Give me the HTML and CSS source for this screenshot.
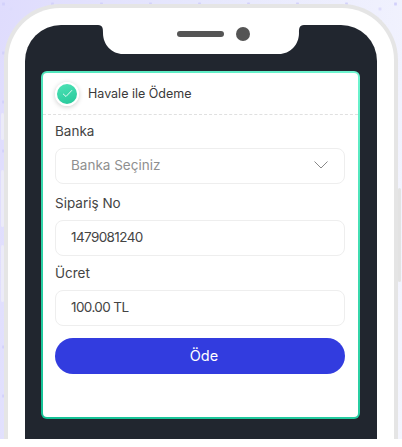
FILE: index.html
```html
<!DOCTYPE html>
<html lang="tr">
   <head>
      <meta charset="utf-8">
      <meta name="viewport" content="width=device-width, initial-scale=1">
      <title>Havale ile Ödeme</title>
      <link rel="stylesheet" href="styles.css">
   </head>
   <body>
      <div class="stage">
         <span class="side-btn side-left btn-a"></span>
         <span class="side-btn side-left btn-b"></span>
         <span class="side-btn side-left btn-c"></span>
         <span class="side-btn side-right"></span>
         <div class="phone">
            <div class="screen">
               <svg class="notch" width="206" height="29" viewBox="0 0 206 29">
                  <path d="M0 0H206C201 0 201 4 201 8C201 20 192 29 181 29H25C14 29 5 20 5 8C5 4 5 0 0 0Z" fill="#fff"/>
                  <rect x="79" y="6" width="47" height="6" rx="3" fill="#555"/>
                  <circle cx="145" cy="9" r="7" fill="#555"/>
               </svg>
               <form class="card">
                  <div class="method">
                     <span class="tick">
                        <svg width="11" height="9" viewBox="0 0 11 9"><path d="M1 4.8L4 7.5L10 1.2" fill="none" stroke="#e8fbf5" stroke-width="1"/></svg>
                     </span>
                     <span class="method-name">Havale ile Ödeme</span>
                  </div>
                  <div class="fields">
                     <label class="field-label label-first">Banka</label>
                     <div class="field select-field">
                        <span class="placeholder">Banka Seçiniz</span>
                        <svg width="14" height="8" viewBox="0 0 14 8"><path d="M0.5 0.5L7 7L13.5 0.5" fill="none" stroke="#888" stroke-width="1"/></svg>
                     </div>
                     <label class="field-label label-order">Sipariş No</label>
                     <div class="field field-value">1479081240</div>
                     <label class="field-label">Ücret</label>
                     <div class="field field-value">100.00 TL</div>
                     <button class="pay" type="button">Öde</button>
                  </div>
               </form>
            </div>
         </div>
      </div>
   </body>
</html>
```

FILE: styles.css
```css
html, body {
   margin: 0;
   background-color: #fff;
}
body {
   font-family: "Inter", "Liberation Sans", sans-serif;
   color: #444;
}
.stage {
   position: relative;
   height: 439px;
   overflow: hidden;
   padding: 4px 4px 0;
   box-sizing: border-box;
   background-color: #eef0fe;
   background-image:
      radial-gradient(circle, #d3d1fb 1.2px, transparent 2px),
      radial-gradient(circle, #dddcfc 1.2px, transparent 2px),
      linear-gradient(100deg, #dfdcfd 0%, #e6e7fd 40%, #f4f5fe 100%);
   background-size: 49px 49px, 41px 47px, 100% 100%;
   background-position: -21px -20.5px, -9.5px -14.5px, 0 0;
}
.side-btn {
   position: absolute;
   width: 3px;
   border-radius: 2px;
}
.side-left {
   left: 1px;
   background-color: #ecebf8;
}
.btn-a {
   top: 113px;
   height: 27px;
}
.btn-b {
   top: 170px;
   height: 57px;
}
.btn-c {
   top: 245px;
   height: 57px;
}
.side-right {
   top: 188px;
   left: 398px;
   height: 94px;
   background-color: #e3e3e3;
}
.phone {
   height: 480px;
   padding: 17px 17px 0;
   box-sizing: border-box;
   background-color: #fff;
   border: 4px solid #e5e5e5;
   border-bottom: 0;
   border-radius: 56px 56px 0 0;
}
.screen {
   position: relative;
   height: 100%;
   padding: 46px 17px 0 16px;
   box-sizing: border-box;
   background-color: #21262f;
   border-radius: 36px 36px 0 0;
}
.notch {
   position: absolute;
   top: 0;
   left: 73px;
}
.card {
   height: 348px;
   box-sizing: border-box;
   border: 2px solid transparent;
   border-radius: 6px;
   background:
      linear-gradient(#fff, #fff) padding-box,
      linear-gradient(20deg, #12c094 0%, #3fdcb0 60%, #70f5d0 100%) border-box;
}
.method {
   display: flex;
   align-items: center;
   gap: 9px;
   height: 41px;
   padding-left: 12px;
   border-bottom: 1px dashed #e0e0e0;
}
.tick {
   display: flex;
   align-items: center;
   justify-content: center;
   width: 20px;
   height: 20px;
   border: 2px solid #fff;
   border-radius: 50%;
   background: linear-gradient(160deg, #4fe3b6, #25c79a);
   box-shadow: 0 1px 5px rgba(0, 0, 0, 0.2);
}
.method-name {
   padding-bottom: 1px;
   font-size: 12.5px;
   color: #3a3a3a;
}
.fields {
   display: flex;
   flex-direction: column;
   padding: 0 13px 0 12px;
}
.field-label {
   display: block;
   margin: 8px 0;
   font-size: 13.5px;
   line-height: 18px;
}
.label-first {
   margin-top: 7px;
}
.label-order {
   margin-top: 10px;
}
.field {
   display: flex;
   align-items: center;
   justify-content: space-between;
   height: 36px;
   padding: 0 16px 2px 15px;
   box-sizing: border-box;
   border: 1px solid #eee;
   border-radius: 8px;
   font-size: 13.5px;
}
.field-value {
   letter-spacing: -0.6px;
}
.placeholder {
   color: #8f8f8f;
}
.pay {
   height: 36px;
   margin-top: 12px;
   padding: 0 0 2px 8px;
   border: 0;
   border-radius: 18px;
   background-color: #323cdf;
   color: #fff;
   font-family: inherit;
   font-size: 14.5px;
}
```
